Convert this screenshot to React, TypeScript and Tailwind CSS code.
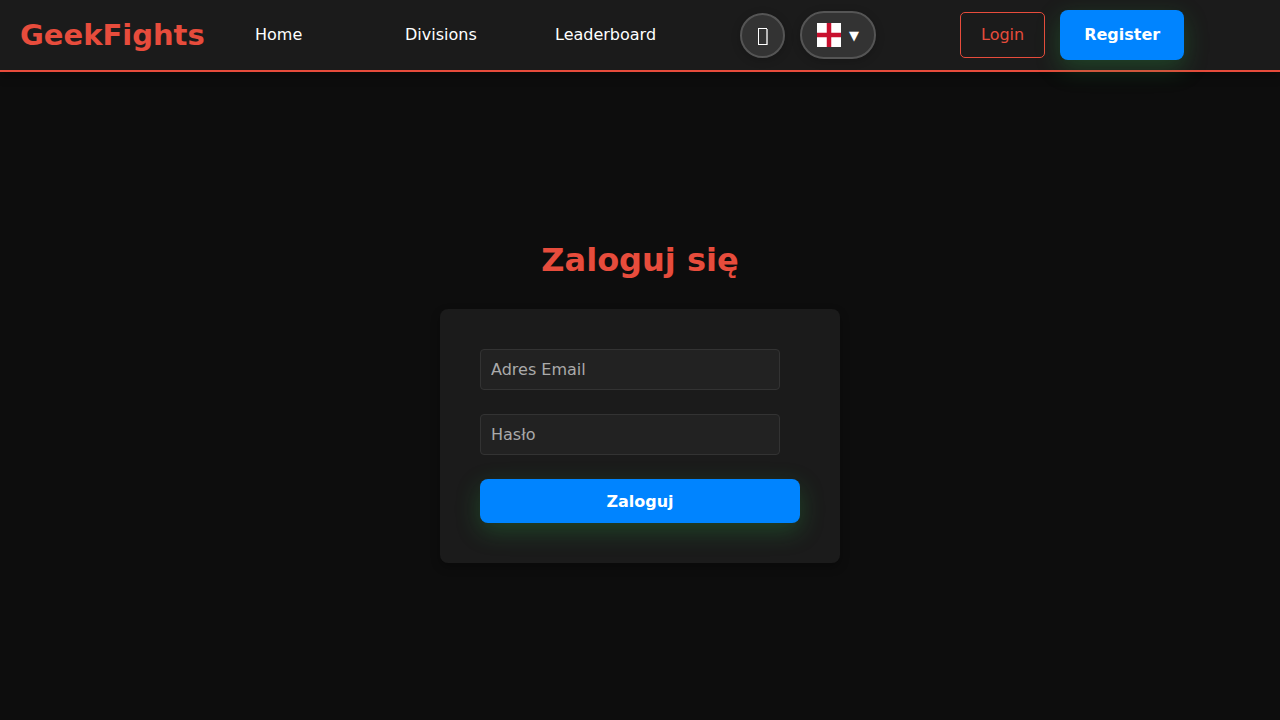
import { useState } from "react";

const links = ["Home", "Divisions", "Leaderboard"];

function EnglandFlag() {
  return (
    <svg width="24" height="24" viewBox="0 0 512 512" aria-hidden="true">
      <path fill="#fff" d="M0 0h512v512H0z" />
      <path fill="#c8102e" d="M208 0h96v512h-96z" />
      <path fill="#c8102e" d="M0 208h512v96H0z" />
    </svg>
  );
}

function BoxIcon() {
  return (
    <svg width="11" height="19" viewBox="0 0 11 19" aria-hidden="true">
      <path fill="#fff" d="M1 2h9v1H1zM1 18h9v1H1zM1 2h1v17H1z" />
      <path fill="#fff" fillOpacity="0.65" d="M9 3h2v16H9z" />
    </svg>
  );
}

function Header() {
  return (
    <header className="relative flex min-h-[72px] items-center border-b-2 border-[#e74c3c] bg-[#1b1b1b] px-5 shadow-[0_4px_10px_rgba(0,0,0,0.3)]">
      <a href="#" className="w-[235px] text-[29px] leading-[34px] font-bold text-[#e74c3c]">
        GeekFights
      </a>
      <nav className="grid grid-cols-[repeat(3,150px)]">
        {links.map((label) => (
          <a key={label} href="#" className="justify-self-start text-white">
            {label}
          </a>
        ))}
      </nav>
      <div className="ml-[35px] flex w-[220px] items-center gap-[15px]">
        <button
          type="button"
          aria-label="Notifications"
          className="flex size-[45px] items-center justify-center rounded-full border-2 border-[#555] bg-[#333] shadow-[0_2px_10px_rgba(0,0,0,0.2)]"
        >
          <BoxIcon />
        </button>
        <button
          type="button"
          aria-label="Language"
          className="flex h-12 items-center gap-2 rounded-full border-2 border-[#555] bg-[#333] px-[15px] text-[13px] text-white shadow-[0_2px_10px_rgba(0,0,0,0.2)]"
        >
          <EnglandFlag />
          <span className="pt-0.5">▼</span>
        </button>
      </div>
      <div className="flex items-center gap-[15px]">
        <button
          type="button"
          className="h-[46px] rounded-[5px] border border-[#e74c3c] px-5 text-[#e74c3c]"
        >
          Login
        </button>
        <button
          type="button"
          className="h-[50px] rounded-lg bg-[#0084ff] px-6 font-bold text-white shadow-[0_8px_24px_rgba(40,167,69,0.3)]"
        >
          Register
        </button>
      </div>
    </header>
  );
}

const field =
  "block h-[41px] w-[300px] max-w-full rounded border border-[#333] bg-[#222] px-2.5 text-white placeholder:text-[#aaa] outline-none";

export default function App() {
  const [email, setEmail] = useState("");
  const [password, setPassword] = useState("");

  return (
    <div className="flex min-h-screen flex-col bg-[#0d0d0d] font-['DejaVu_Sans',sans-serif] text-base">
      <Header />
      <main className="flex flex-1 flex-col items-center justify-center pt-3">
        <h1 className="mb-[30px] text-[32px] leading-[38px] font-bold text-[#e74c3c]">
          Zaloguj się
        </h1>
        <form
          onSubmit={(e) => e.preventDefault()}
          className="flex w-full max-w-[400px] flex-col gap-6 rounded-lg bg-[#1b1b1b] p-10 shadow-[0_4px_10px_rgba(0,0,0,0.3)]"
        >
          <input
            type="email"
            aria-label="Adres Email"
            placeholder="Adres Email"
            value={email}
            onChange={(e) => setEmail(e.target.value)}
            className={field}
          />
          <input
            type="password"
            aria-label="Hasło"
            placeholder="Hasło"
            value={password}
            onChange={(e) => setPassword(e.target.value)}
            className={field}
          />
          <button
            type="submit"
            className="h-11 w-full rounded-lg bg-[#0084ff] pt-0.5 font-bold text-white shadow-[0_8px_24px_rgba(40,167,69,0.3)]"
          >
            Zaloguj
          </button>
        </form>
      </main>
    </div>
  );
}
